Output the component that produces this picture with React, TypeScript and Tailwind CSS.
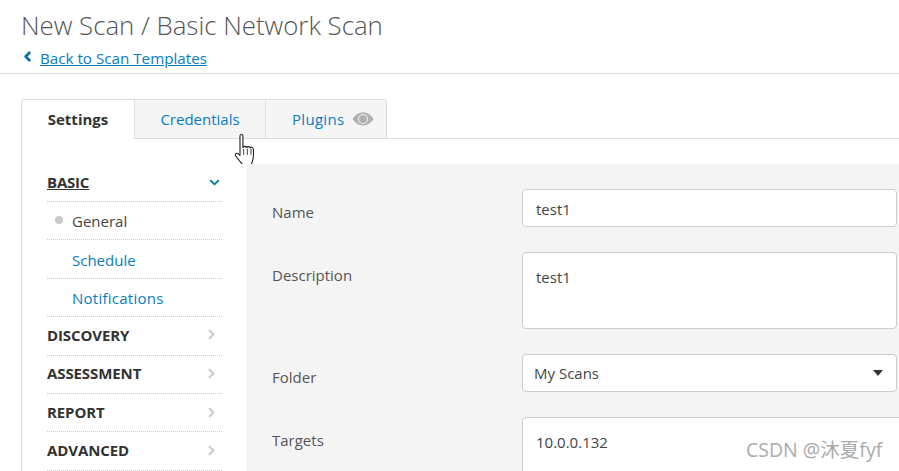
import React from 'react';
import { ChevronRight, ChevronDown, ChevronLeft } from 'lucide-react';

const FONT = 'font-["Open_Sans","Noto_Sans_CJK_SC",sans-serif]';

const SubItem = ({ label, active, wide }: { label: string; active?: boolean; wide?: boolean }) => (
  <div className="relative h-[38.4px] border-b border-dotted border-[#ccc] pl-[25px] pt-[2px] flex items-center">
    {active && <span className="absolute left-[8px] top-[14px] w-[8px] h-[8px] rounded-full bg-[#c8c8c8]" />}
    <span className={`text-[15px] ${active ? 'text-[#444]' : 'text-[#0a7cc1]'} ${wide ? 'tracking-[0.25px]' : ''}`}>{label}</span>
  </div>
);

const Section = ({ label, low }: { label: string; low?: boolean }) => (
  <div className={`h-[38.4px] border-b border-dotted border-[#ccc] flex items-center justify-between ${low ? '' : 'pb-[2px]'}`}>
    <span className="text-[15px] font-bold text-[#333] tracking-[-0.1px]">{label}</span>
    <ChevronRight size={15} strokeWidth={3.5} className="text-[#cccccc] mr-[3px]" />
  </div>
);

const Field = ({ label, children, className }: { label: string; children: React.ReactNode; className?: string }) => (
  <div className={`flex ${className ?? ''}`}>
    <div className="w-[250px] text-[15px] text-[#555] leading-[20px]">{label}</div>
    <div className="flex-1 min-w-0">{children}</div>
  </div>
);

export default function App() {
  return (
    <div className={`${FONT} relative w-[899px] h-[471px] overflow-hidden bg-white`}>
      <div className="h-[74px] border-b border-[#ddd] pl-[21px] pt-[7px]">
        <h1 className="text-[25.8px] font-light text-[#555] leading-[36px]">New Scan / Basic Network Scan</h1>
        <div className="flex items-center mt-[5px] ml-[1px]">
          <ChevronLeft size={15} strokeWidth={4.5} className="text-[#0a6fb0] -ml-[2px] mr-[5px] -mt-[3px]" />
          <a className="text-[15.2px] text-[#0a7cc1] underline leading-[20px]">Back to Scan Templates</a>
        </div>
      </div>

      <div className="pl-[21px] pt-[25px]">
        <div className="flex h-[40px]">
          <div className="w-[113px] h-[40px] bg-white border-l border-t border-[#ddd] rounded-tl-[4px] flex items-center justify-center text-[15px] font-bold text-[#333] relative z-10">
            Settings
          </div>
          <div className="flex-1 flex items-stretch border-b border-[#ddd]">
            <div className="flex h-[39px]">
              <div className="w-[131px] bg-[#f5f5f5] border-l border-t border-[#ddd] flex items-center justify-center text-[15px] text-[#0a7cc1]">
                Credentials
              </div>
              <div className="w-[122px] bg-[#f5f5f5] border-x border-t border-[#ddd] rounded-tr-[4px] pl-[26px] flex items-center gap-[8px] text-[15px] tracking-[0.3px] text-[#0a7cc1]">
                Plugins
                <svg width="22" height="14" viewBox="0 0 22 14">
                  <path d="M0.5 7C3.5 2.4 7 .6 11 .6s7.5 1.8 10.5 6.4c-3 4.6-6.5 6.4-10.5 6.4S3.5 11.6.5 7z" fill="#b0b0b0" />
                  <circle cx="11" cy="7" r="5" fill="#f5f5f5" />
                  <circle cx="11" cy="7" r="4" fill="#b0b0b0" />
                </svg>
              </div>
            </div>
          </div>
        </div>

        <div className="flex border-l border-[#ddd] h-[400px] pl-[25px] pt-[25px]">
          <div className="w-[175px] shrink-0">
            <div className="h-[38px] border-b border-dotted border-[#ccc] flex items-center justify-between">
              <span className="text-[15px] font-bold text-[#333] underline tracking-[-0.2px]">BASIC</span>
              <ChevronDown size={15} strokeWidth={3} className="text-[#0a7c9c]" />
            </div>
            <SubItem label="General" active />
            <SubItem label="Schedule" />
            <SubItem label="Notifications" wide />
            <Section label="DISCOVERY" />
            <Section label="ASSESSMENT" />
            <Section label="REPORT" low />
            <Section label="ADVANCED" />
          </div>

          <div className="ml-[25px] flex-1 min-w-0 bg-[#f4f4f4] pl-[25px] pt-[25px]">
            <Field label="Name" className="items-center h-[38px] pt-[7px]">
              <div className="w-[375px] h-[38px] -mt-[7px] bg-white border border-[#ccc] rounded-[4px] px-[13px] pt-[2px] flex items-center text-[15px] text-[#444]">test1</div>
            </Field>
            <Field label="Description" className="mt-[25px] pt-[13px]">
              <div className="w-[375px] h-[77px] -mt-[13px] bg-white border border-[#ccc] rounded-[4px] px-[13px] pt-[14px] text-[15px] leading-[20px] text-[#444]">test1</div>
            </Field>
            <Field label="Folder" className="mt-[25px] items-center h-[38px] pt-[7px]">
              <div className="w-[375px] h-[38px] -mt-[7px] bg-white border border-[#ccc] rounded-[4px] pl-[11px] pr-[13px] flex items-center justify-between text-[15px] text-[#444]">
                My Scans
                <span className="w-0 h-0 border-x-[5.5px] border-x-transparent border-t-[6px] border-t-[#333]" />
              </div>
            </Field>
            <Field label="Targets" className="mt-[25px] pt-[13px]">
              <div className="w-[400px] h-[77px] -mt-[13px] bg-white border border-[#ccc] rounded-[4px] px-[13px] pt-[14px] text-[15px] leading-[20px] text-[#444]">10.0.0.132</div>
            </Field>
          </div>
        </div>
      </div>

      {/* mouse pointer */}
      <svg className="absolute left-[234px] top-[134px]" width="23" height="30" viewBox="2 1 17 24.5">
        <path
          d="M6 2.5c0-1.4 2.4-1.4 2.4 0V12c.6-1.2 2.6-1.2 3 0 .5-1 2.4-1 2.8.3.6-.9 2.4-.7 2.6.7.4 3 .2 7-.4 9.5-.3 1.4-.8 2.5-1.4 3.5H8.2C6 23.5 4 21 2.6 19c-1-1.6.6-3 2-1.8L6 18.5V2.5z"
          fill="#fff"
          stroke="#222"
          strokeWidth="0.9"
          strokeLinejoin="round"
        />
        <path d="M9 13v5M12 13v5M15 13v5" stroke="#222" strokeWidth="0.7" />
      </svg>

      <div className="absolute left-[746px] top-[437px] text-[19.5px] leading-[26px] text-[#aaaaaa]">CSDN @沐夏fyf</div>
    </div>
  );
}
